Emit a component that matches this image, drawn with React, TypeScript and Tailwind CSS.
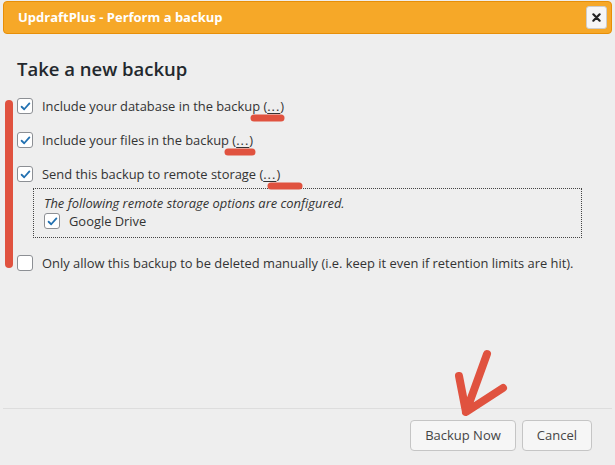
import React from 'react';

const font = { fontFamily: '"Open Sans", "DejaVu Sans", sans-serif' };

function Check({ checked }: { checked: boolean }) {
  return (
    <span className="inline-flex h-4 w-4 shrink-0 items-center justify-center rounded-[3px] border border-[#8c8f94] bg-white">
      {checked && (
        <svg viewBox="0 0 16 16" className="h-[13px] w-[13px]">
          <path d="M3.2 8.3 L6.4 11.4 L12.8 4.2" fill="none" stroke="#2271b1" strokeWidth="2.2" strokeLinecap="round" strokeLinejoin="round" />
        </svg>
      )}
    </span>
  );
}

function Row({ checked, children }: { checked: boolean; children: React.ReactNode }) {
  return (
    <label className="flex items-center gap-[9px] text-[12.9px] leading-[18px] text-[#333]">
      <Check checked={checked} />
      <span>{children}</span>
    </label>
  );
}

const More = () => (
  <span>
    (<span className="underline underline-offset-2 tracking-[1px]">...</span>)
  </span>
);

export default function App() {
  return (
    <div className="relative h-[465px] w-[615px] overflow-hidden bg-[#eeeeee]" style={font}>
      <div className="flex h-full flex-col">
        {/* title bar */}
        <div className="mx-[3px] mt-[1px] flex h-[33px] items-center justify-between rounded-[4px] border border-[#e78f08] bg-[#f6a828] pl-[14px] pr-[4px]">
          <span className="text-[13px] font-bold text-white">UpdraftPlus - Perform a backup</span>
          <button className="flex h-[23px] w-[21px] items-center justify-center rounded-[3px] border border-[#cccccc] bg-[#f6f6f6]">
            <svg viewBox="0 0 10 10" className="h-[9px] w-[9px]">
              <path d="M1.5 1.5 L8.5 8.5 M8.5 1.5 L1.5 8.5" stroke="#222" strokeWidth="2.4" strokeLinecap="round" />
            </svg>
          </button>
        </div>

        {/* content */}
        <div className="flex-1 px-[17px] pt-[23px]">
          <h2 className="text-[18.5px] font-semibold leading-[24px] text-[#23282d]">Take a new backup</h2>
          <div className="mt-[16px] flex flex-col gap-[16px]">
            <Row checked>Include your database in the backup <More /></Row>
            <Row checked>Include your files in the backup <More /></Row>
            <Row checked>Send this backup to remote storage <More /></Row>
          </div>
          <div className="ml-[16px] mr-[16px] mt-[5px] border border-dotted border-[#444] px-[10px] pb-[7px] pt-[5px] text-[12.9px] leading-[18px] text-[#333]">
            <div className="italic">The following remote storage options are configured.</div>
            <label className="flex items-center gap-[9px]">
              <Check checked />
              <span>Google Drive</span>
            </label>
          </div>
          <div className="mt-[16px]">
            <Row checked={false}>Only allow this backup to be deleted manually (i.e. keep it even if retention limits are hit).</Row>
          </div>
        </div>

        {/* footer */}
        <div className="mx-[3px] mb-[14px] flex justify-end gap-[6px] border-t border-[#dddddd] pr-[20px] pt-[11px]">
          <button className="h-[31px] rounded-[4px] border border-[#c5c5c5] bg-[#f6f6f6] px-[14px] text-[13px] text-[#454545]">Backup Now</button>
          <button className="h-[31px] rounded-[4px] border border-[#c5c5c5] bg-[#f6f6f6] px-[14px] text-[13px] text-[#454545]">Cancel</button>
        </div>
      </div>

      {/* red annotation marks */}
      <svg className="pointer-events-none absolute left-0 top-0" width="615" height="465" viewBox="0 0 615 465">
        <g stroke="#e0523f" strokeLinecap="round" fill="none">
          <path d="M9 104 L9 264" strokeWidth="8" />
          <path d="M254 118 L281 118" strokeWidth="7" />
          <path d="M228 152 L252 152" strokeWidth="7" />
          <path d="M271 186 L299 186" strokeWidth="7" />
          <path d="M487 354 L466 412 M459 376 L466 412 L503 388" strokeWidth="8" strokeLinejoin="round" />
        </g>
      </svg>
    </div>
  );
}
